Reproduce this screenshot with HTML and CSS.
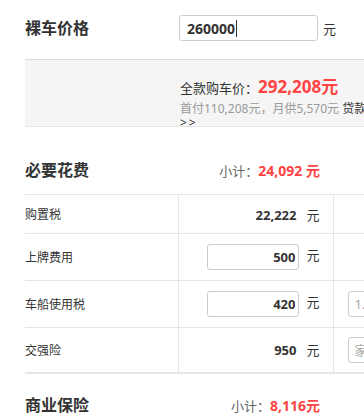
FILE: index.html
```html
<!DOCTYPE html>
<html lang="zh-CN">
<head>
    <meta charset="UTF-8">
    <meta name="viewport" content="width=device-width, initial-scale=1.0">
    <title>购车计算器</title>
    <link rel="stylesheet" href="styles.css">
</head>
<body>
    <div class="page">
        <!-- 裸车价格 -->
        <div class="price-row">
            <h2 class="sec-title">裸车价格</h2>
            <div class="price-input"><span>260000</span><i class="caret"></i></div>
            <span class="unit">元</span>
        </div>

        <div class="total-box">
            <p class="total-line">全款购车价：<strong>292,208元</strong></p>
            <p class="loan-line">首付110,208元，月供5,570元 <a href="#">贷款计算 <span class="arrows">&gt;&gt;</span></a></p>
        </div>

        <!-- 必要花费 -->
        <div class="sec-head">
            <h2 class="sec-title">必要花费</h2>
            <span class="subtotal">小计：<b>24,092 元</b></span>
        </div>

        <table class="fee-table">
            <tr class="row-static">
                <td class="c-name">购置税</td>
                <td class="c-val"><b class="val">22,222</b><span class="unit">元</span></td>
                <td class="c-opt"></td>
            </tr>
            <tr class="row-input">
                <td class="c-name">上牌费用</td>
                <td class="c-val"><input class="fee-input" type="text" value="500"><span class="unit">元</span></td>
                <td class="c-opt"></td>
            </tr>
            <tr class="row-input">
                <td class="c-name">车船使用税</td>
                <td class="c-val"><input class="fee-input" type="text" value="420"><span class="unit">元</span></td>
                <td class="c-opt"><input class="opt-input" type="text" placeholder="1.6L以下"></td>
            </tr>
            <tr class="row-last">
                <td class="c-name">交强险</td>
                <td class="c-val"><b class="val">950</b><span class="unit">元</span></td>
                <td class="c-opt"><input class="opt-input" type="text" placeholder="家庭用车"></td>
            </tr>
        </table>

        <!-- 商业保险 -->
        <div class="sec-head sec-head-2">
            <h2 class="sec-title">商业保险</h2>
            <span class="subtotal">小计：<b>8,116元</b></span>
        </div>
    </div>
</body>
</html>
```

FILE: styles.css
```css
* {
    margin: 0;
    padding: 0;
    box-sizing: border-box;
}

body {
    font-family: "Noto Sans", "Noto Sans CJK SC", sans-serif;
    color: #333;
    overflow: hidden;
}

.page {
    width: 700px;
    padding-left: 25px;
}

.sec-title {
    font-size: 16px;
    font-weight: bold;
    line-height: 23px;
    color: #333;
}

.unit {
    font-size: 13px;
    color: #333;
}

/* 裸车价格 */
.price-row {
    display: flex;
    align-items: center;
    height: 60px;
    padding-bottom: 3px;
    border-bottom: 1px solid #ddd;
}

.price-row .sec-title {
    width: 154px;
}

.price-input {
    width: 139px;
    height: 26px;
    border: 1px solid #ccc;
    border-radius: 3px;
    padding-left: 7px;
    display: flex;
    align-items: center;
    font-size: 14px;
    font-weight: bold;
}

.caret {
    width: 1px;
    height: 17px;
    background: #333;
    margin-left: 1px;
}

.price-row .unit {
    margin-left: 5px;
}

/* 全款购车价 */
.total-box {
    background: #f5f5f5;
    border-bottom: 1px solid #e5e5e5;
    height: 67px;
    padding: 13px 0 0 155px;
    overflow: hidden;
}

.total-line {
    font-size: 13px;
    line-height: 28px;
}

.total-line strong {
    color: #f44;
    font-size: 17px;
}

.loan-line {
    width: 220px;
    font-size: 12px;
    line-height: 14px;
    color: #999;
}

.loan-line a {
    color: #333;
    text-decoration: none;
}

.arrows {
    letter-spacing: 2px;
}

/* 分区标题 */
.sec-head {
    width: 308px;
    display: flex;
    justify-content: space-between;
    align-items: baseline;
    padding: 32px 13px 12px 0;
}

.sec-head-2 {
    padding-top: 20px;
}

.subtotal {
    font-size: 13px;
    color: #666;
}

.subtotal b {
    font-size: 14px;
    color: #f44;
}

/* 费用表 */
.fee-table {
    width: 675px;
    border-collapse: collapse;
    border-top: 1px solid #e5e5e5;
    border-bottom: 2px solid #e5e5e5;
}

.fee-table td {
    border-bottom: 1px solid #e5e5e5;
    font-size: 12px;
    vertical-align: middle;
}

.row-static td {
    height: 39px;
}

.row-input td {
    height: 47px;
}

.row-last td {
    height: 45px;
}

.c-name {
    width: 153px;
}

.c-val {
    width: 155px;
    text-align: right;
    padding-right: 13px;
    border-left: 1px solid #e5e5e5;
    border-right: 1px solid #e5e5e5;
}

.c-val .val {
    font-size: 13px;
    padding-right: 3px;
}

.c-val .unit {
    margin-left: 7px;
}

.fee-input {
    width: 92px;
    height: 26px;
    border: 1px solid #ccc;
    border-radius: 3px;
    padding-right: 3px;
    text-align: right;
    font-family: inherit;
    font-size: 13px;
    font-weight: bold;
    color: #333;
    vertical-align: middle;
}

.c-opt {
    padding-left: 14px;
}

.opt-input {
    width: 120px;
    height: 26px;
    border: 1px solid #ccc;
    border-radius: 3px;
    padding-left: 6px;
    font-family: inherit;
    font-size: 13px;
    vertical-align: middle;
}

.opt-input::placeholder {
    color: #aaa;
}
```
